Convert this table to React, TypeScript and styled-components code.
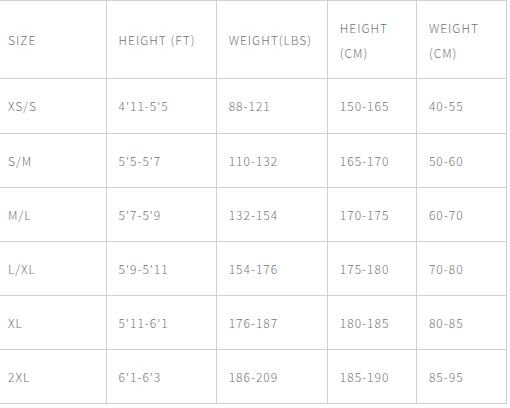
import React from "react";
import styled, { createGlobalStyle } from "styled-components";

const Global = createGlobalStyle`
  html, body { margin: 0; padding: 0; background: #fff; }
`;

const Table = styled.table`
  border-collapse: collapse;
  table-layout: fixed;
  width: 507px;
  font-family: "Noto Sans CJK SC", "Noto Sans", sans-serif;
  font-size: 12px;
  letter-spacing: 1px;
  color: #747474;
`;

const Cell = styled.td<{ $first?: boolean }>`
  border: 1px solid #d0d0d0;
  border-left: ${(p) => (p.$first ? "none" : "1px solid #d0d0d0")};
  padding: 14px 8px 14px ${(p) => (p.$first ? "8px" : "12px")};
  line-height: 25.17px;
  vertical-align: middle;
  text-align: left;
  font-weight: 300;
`;

const HeadCell = styled(Cell).attrs({ as: "th" })`
  padding-top: 13.5px;
  padding-bottom: 13.5px;
`;

const widths = [106, 110, 111, 89, 90];

const headers: React.ReactNode[] = [
  "SIZE",
  "HEIGHT (FT)",
  "WEIGHT(LBS)",
  <>HEIGHT<br />(CM)</>,
  <>WEIGHT<br />(CM)</>,
];

const rows = [
  ["XS/S", "4'11-5'5", "88-121", "150-165", "40-55"],
  ["S/M", "5'5-5'7", "110-132", "165-170", "50-60"],
  ["M/L", "5'7-5'9", "132-154", "170-175", "60-70"],
  ["L/XL", "5'9-5'11", "154-176", "175-180", "70-80"],
  ["XL", "5'11-6'1", "176-187", "180-185", "80-85"],
  ["2XL", "6'1-6'3", "186-209", "185-190", "85-95"],
];

export default function App() {
  return (
    <>
      <Global />
      <Table>
        <colgroup>
          {widths.map((w, i) => (
            <col key={i} style={{ width: w }} />
          ))}
        </colgroup>
        <thead>
          <tr>
            {headers.map((h, i) => (
              <HeadCell key={i} $first={i === 0}>
                {h}
              </HeadCell>
            ))}
          </tr>
        </thead>
        <tbody>
          {rows.map((r, ri) => (
            <tr key={ri}>
              {r.map((c, ci) => (
                <Cell key={ci} $first={ci === 0}>
                  {c}
                </Cell>
              ))}
            </tr>
          ))}
        </tbody>
      </Table>
    </>
  );
}
